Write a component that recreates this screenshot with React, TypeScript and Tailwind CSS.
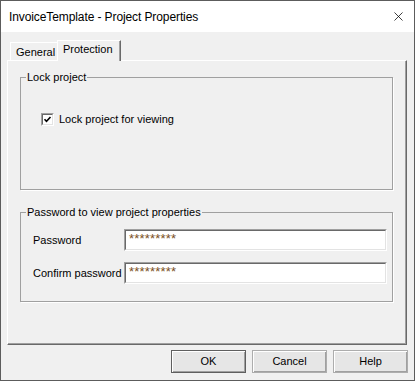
import { X } from 'lucide-react';

const sans = { fontFamily: '"Liberation Sans", Arial, sans-serif' };

function GroupBox({ label, className, children }: { label: string; className: string; children?: React.ReactNode }) {
  return (
    <div className={`relative border border-[#a0a0a0] shadow-[1px_1px_0_#fff] ${className}`}>
      <span className="absolute -top-[8px] left-[5px] bg-[#f0f0f0] px-[1px] text-[11px] leading-[14px] text-black">
        {label}
      </span>
      {children}
    </div>
  );
}

function Field({ label, value }: { label: string; value: string }) {
  return (
    <div className="flex items-center h-[22px]">
      <span className="w-[103px] pl-[12px] text-[11px] leading-[14px] text-black whitespace-nowrap">{label}</span>
      <div className="w-[263px] h-[22px] bg-white border-t border-l border-t-[#a0a0a0] border-l-[#a0a0a0] border-r border-b border-r-white border-b-white">
        <div className="h-full border-t border-l border-t-[#696969] border-l-[#696969] border-r border-b border-r-[#e3e3e3] border-b-[#e3e3e3] pl-[3px] pt-[1px] text-[13px] leading-[14px] text-[#7a4f1e] tracking-[0.2px]">
          {value}
        </div>
      </div>
    </div>
  );
}

function Button({ label, isDefault }: { label: string; isDefault?: boolean }) {
  return (
    <button
      className={`w-[75px] h-[23px] bg-[#e6e6e6] text-[11px] text-black ${
        isDefault ? 'border border-[#5f5f5f]' : 'border border-[#adadad]'
      }`}
    >
      <div className="h-full flex items-center justify-center shadow-[inset_1px_1px_0_#fff,inset_-1px_-1px_0_#a0a0a0]">
        {label}
      </div>
    </button>
  );
}

export default function App() {
  return (
    <div className="w-[415px] h-[381px] border border-[#5c5c5c] bg-[#f0f0f0] flex flex-col" style={sans}>
      {/* title bar */}
      <div className="h-[31px] bg-white flex items-center justify-between pl-[8px] pr-[8px]">
        <span className="text-[12px] tracking-[-0.1px] text-black">InvoiceTemplate - Project Properties</span>
        <X className="w-[15px] h-[15px] text-black" strokeWidth={1.2} />
      </div>

      <div className="flex-1 flex flex-col px-[6px] pt-[8px]">
        {/* tabs */}
        <div className="flex items-end h-[20px] pl-[3px]">
          <div className="h-[18px] w-[48px] border-t border-l border-t-white border-l-white shadow-[inset_-1px_0_0_#a0a0a0] flex items-start pl-[5px] pt-[2px] text-[11px] leading-[14px] text-black">
            General
          </div>
          <div className="relative h-[21px] -mb-[1px] w-[64px] -ml-[1px] bg-[#f0f0f0] border-t border-l border-t-white border-l-white border-r border-r-[#696969] shadow-[inset_-1px_0_0_#a0a0a0] pl-[5px] pt-[1px] text-[11px] leading-[14px] text-black z-10">
            Protection
          </div>
        </div>

        {/* panel */}
        <div className="w-[400px] h-[285px] border-t border-l border-t-white border-l-white border-r border-b border-r-[#696969] border-b-[#696969] shadow-[inset_-1px_-1px_0_#a0a0a0] px-[12px] pt-[16px]">
          <GroupBox label="Lock project" className="w-[373px] h-[113px]">
            <label className="flex items-center gap-[5px] ml-[20px] mt-[34px]">
              <span className="w-[13px] h-[13px] bg-white border-t border-l border-t-[#a0a0a0] border-l-[#a0a0a0] border-r border-b border-r-white border-b-white">
                <span className="block w-[11px] h-[11px] border-t border-l border-t-[#696969] border-l-[#696969] border-r border-b border-r-[#e3e3e3] border-b-[#e3e3e3]">
                  <svg viewBox="0 0 9 9" className="w-[9px] h-[9px]">
                    <path d="M1.5 4.2 L3.5 6.3 L7.5 2" fill="none" stroke="#000" strokeWidth="1.6" />
                  </svg>
                </span>
              </span>
              <span className="text-[11px] leading-[14px] text-black">Lock project for viewing</span>
            </label>
          </GroupBox>

          <GroupBox label="Password to view project properties" className="w-[373px] h-[90px] mt-[22px] flex flex-col gap-[11px] pt-[16px]">
            <Field label="Password" value="*********" />
            <Field label="Confirm password" value="*********" />
          </GroupBox>
        </div>

        {/* buttons */}
        <div className="flex justify-end gap-[6px] mt-[5px]">
          <Button label="OK" isDefault />
          <Button label="Cancel" />
          <Button label="Help" />
        </div>
      </div>
    </div>
  );
}
